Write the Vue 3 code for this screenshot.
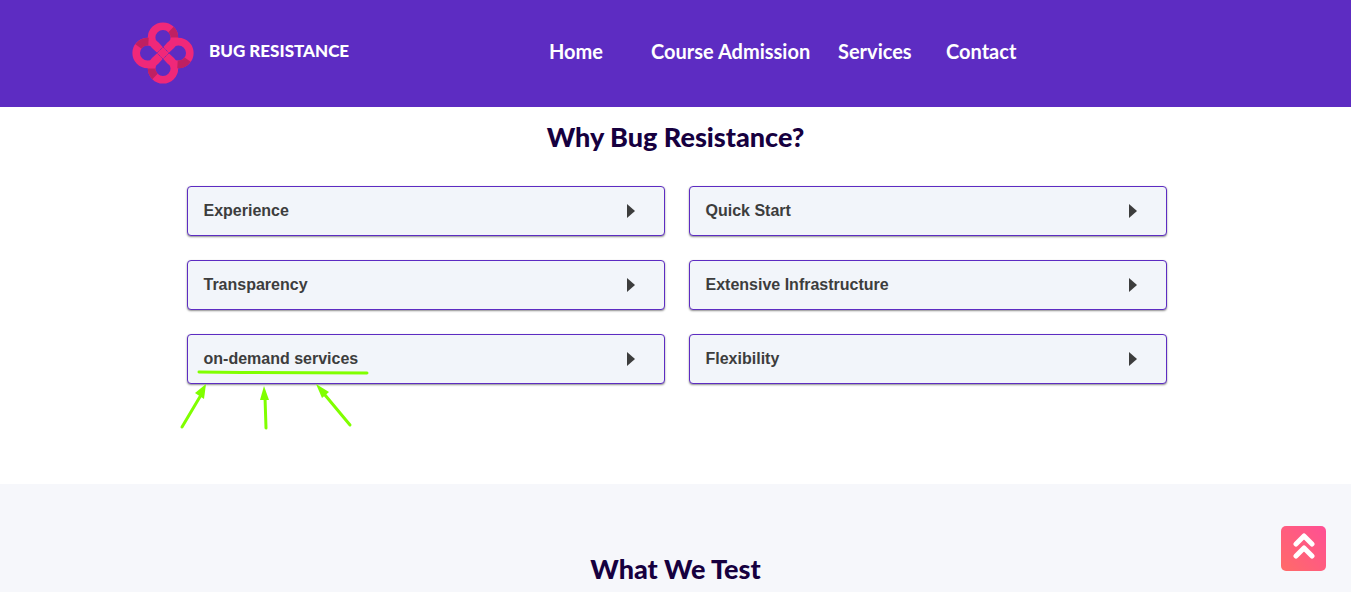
<script setup>
const links = ['Home', 'Course Admission', 'Services', 'Contact']
const reasons = [
  'Experience',
  'Quick Start',
  'Transparency',
  'Extensive Infrastructure',
  'on-demand services',
  'Flexibility',
]
</script>

<template>
  <div class="page">
    <header class="topbar">
      <a class="brand" href="#">
        <svg class="logo" viewBox="0 0 62 62" aria-hidden="true">
          <g fill="none" stroke="#f02879" stroke-width="7.600">
            <path d="M31 31L22.900 23.600A11.400 11.400 0 1 1 39.100 23.600Z" />
            <path d="M31 31L38.400 22.900A11.400 11.400 0 1 1 38.400 39.100Z" />
            <path d="M31 31L39.100 38.400A11.400 11.400 0 1 1 22.900 38.400Z" />
            <path d="M31 31L23.600 39.100A11.400 11.400 0 1 1 23.600 22.900Z" />
          </g>
          <g fill="none" stroke="#bf2062" stroke-width="7.600">
            <path d="M39 7.500A11.400 11.400 0 0 1 42.400 15.500" />
            <path d="M6.500 24.500A11.400 11.400 0 0 1 16.500 19.600" />
            <path d="M19.600 46.500A11.400 11.400 0 0 0 23 54.500" />
            <path d="M45.500 42.400A11.400 11.400 0 0 0 55.500 37.500" />
          </g>
          <path
            d="M31 25L37 31L31 37L25 31Z"
            fill="#f02879"
            stroke="#7a2bb0"
            stroke-width="1"
            stroke-dasharray="1.4 .7"
          />
        </svg>
        <span>BUG RESISTANCE</span>
      </a>
      <nav class="nav" aria-label="Main">
        <a v-for="link in links" :key="link" href="#">{{ link }}</a>
      </nav>
    </header>

    <main>
      <section class="why">
        <h2>Why Bug Resistance?</h2>
        <div class="cards">
          <button v-for="reason in reasons" :key="reason" class="card" type="button">
            <span>{{ reason }}</span>
            <svg class="caret" viewBox="0 0 8 14" aria-hidden="true">
              <path d="M0 0L8 7L0 14Z" />
            </svg>
          </button>
          <svg class="marks" viewBox="0 0 200 64" aria-hidden="true">
            <g fill="none" stroke="#80ff00" stroke-width="3" stroke-linecap="round">
              <path d="M24 6L66 6.400L192 7" />
              <path d="M7 61L26 29" />
              <path d="M91 62L90 31" />
              <path d="M175 59L150 29" />
            </g>
            <g fill="#80ff00">
              <path d="M31 18L29 33L20 27Z" />
              <path d="M89 20L94 34H85Z" />
              <path d="M141 18L154 26L147 32Z" />
            </g>
          </svg>
        </div>
      </section>

      <section class="tests">
        <h2>What We Test</h2>
      </section>
    </main>

    <button class="to-top" type="button" aria-label="Back to top">
      <svg viewBox="0 0 22 28" aria-hidden="true">
        <path d="M3 12L11 4L19 12M3 24L11 16L19 24" />
      </svg>
    </button>
  </div>
</template>

<style>
body {
  margin: 0;
  overflow: hidden;
}
</style>

<style scoped>
.page {
  height: 100vh;
  overflow: hidden;
  display: flex;
  flex-direction: column;
  background: #fff;
  font-family: Lato, "Open Sans", sans-serif;
}
main {
  flex: 1;
  display: flex;
  flex-direction: column;
}
.topbar {
  display: flex;
  align-items: center;
  flex-shrink: 0;
  height: 107px;
  padding: 0 132px 2px;
  box-sizing: border-box;
  background: #5d2cc2;
}
.brand {
  display: flex;
  align-items: center;
  gap: 15px;
  width: 417px;
  color: #fff;
  font-size: 17px;
  font-weight: 900;
  line-height: 24px;
  text-decoration: none;
}
.brand span {
  padding-bottom: 4px;
}
.logo {
  width: 62px;
  height: 62px;
}
.nav {
  display: grid;
  grid-template-columns: 102px 187px 108px auto;
  padding-bottom: 4px;
}
.nav a {
  color: #fff;
  font-size: 20px;
  font-weight: 700;
  line-height: 24px;
  text-decoration: none;
  white-space: nowrap;
}
h2 {
  margin: 0;
  color: #16003f;
  font-size: 27px;
  font-weight: 900;
  line-height: 32px;
  text-align: center;
}
.why {
  padding: 14px 24px 100px;
}
.cards {
  position: relative;
  display: grid;
  grid-template-columns: 1fr 1fr;
  gap: 24px;
  max-width: 980px;
  margin: 33px auto 0;
  left: 1px;
}
.card {
  display: flex;
  align-items: center;
  justify-content: space-between;
  height: 50px;
  padding: 0 29px 0 16px;
  border: 1px solid #5d2cc2;
  border-radius: 4px;
  background: #f2f5fa;
  box-shadow: 0 1px 2px rgba(0, 0, 0, 0.45);
  color: #3d3d3d;
  font: 700 16px/24px "Liberation Sans", Arial, sans-serif;
}
.caret {
  width: 8px;
  height: 14px;
  fill: #3d3d3d;
}
.marks {
  position: absolute;
  left: -12px;
  top: 180px;
  width: 200px;
  height: 64px;
  pointer-events: none;
}
.tests {
  flex: 1;
  padding-top: 69px;
  background: #f6f7fb;
}
.to-top {
  position: fixed;
  right: 25px;
  bottom: 21px;
  display: flex;
  justify-content: center;
  width: 45px;
  height: 45px;
  padding: 6px 0 0;
  border: 0;
  border-radius: 5px;
  background: linear-gradient(45deg, #ff6b68, #ff4f95);
}
.to-top svg {
  width: 22px;
  height: 28px;
  fill: none;
  stroke: #fff;
  stroke-width: 5;
  stroke-linecap: round;
  stroke-linejoin: round;
}
</style>
